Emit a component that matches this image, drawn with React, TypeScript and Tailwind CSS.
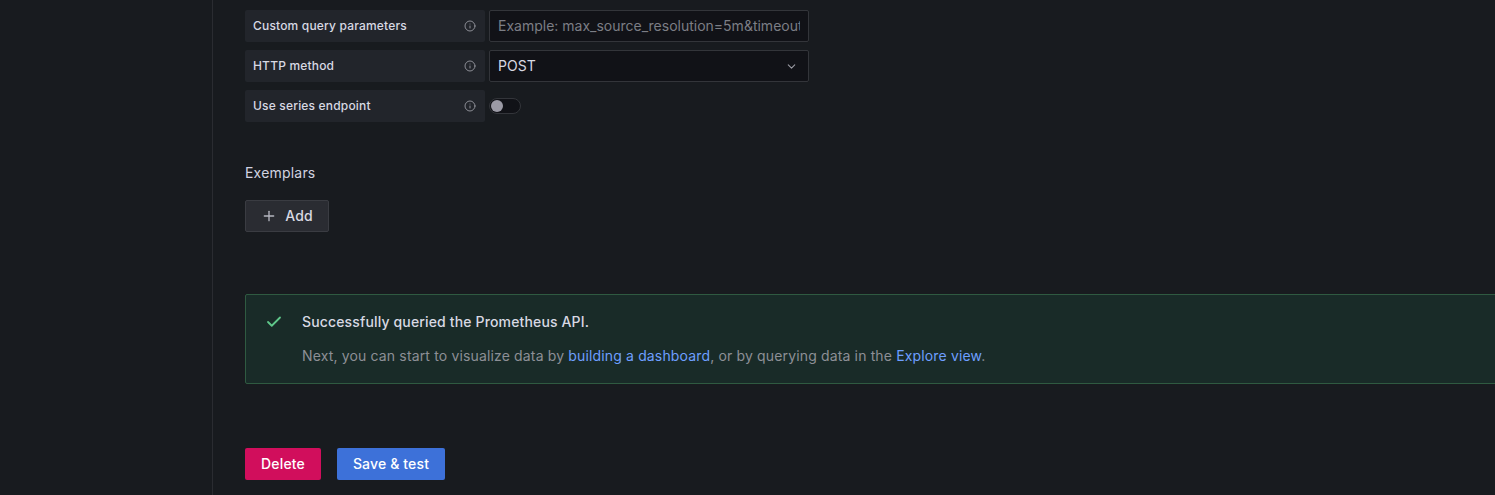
import { Check, ChevronDown, Info, Plus } from "lucide-react";

function Label({ text }: { text: string }) {
  return (
    <div className="flex h-8 w-[240px] shrink-0 items-center justify-between rounded-[2px] bg-[#22252b] px-2 text-xs font-medium tracking-[0.18px] text-[#d8d9e3]">
      <span>{text}</span>
      <Info size={12} strokeWidth={1.75} className="mr-[1px] text-[#9a9ba3]" />
    </div>
  );
}

export default function App() {
  return (
    <div className="flex h-[495px] w-[1495px] overflow-hidden bg-[#181b1f] font-['Inter','Noto_Sans',sans-serif] text-sm">
      <div className="w-[213px] shrink-0 border-r border-[#2a2c31] bg-[#181b1f]" />
      <div className="flex min-w-0 flex-1 flex-col pl-8 pt-[10px]">
        <div className="flex flex-col gap-2">
          <div className="flex gap-1">
            <Label text="Custom query parameters" />
            <div className="flex h-8 w-[320px] items-center overflow-hidden rounded-[2px] border border-[#33353a] bg-[#111217] px-2 text-sm whitespace-nowrap text-[#7c7e85]">
              <span className="block w-[302px] overflow-hidden">Example: max_source_resolution=5m&amp;timeout=10</span>
            </div>
          </div>
          <div className="flex gap-1">
            <Label text="HTTP method" />
            <div className="flex h-8 w-[320px] items-center justify-between rounded-[2px] border border-[#33353a] bg-[#111217] pr-[10px] pl-2 text-sm text-[#d8d9e3]">
              <span>POST</span>
              <ChevronDown size={13} strokeWidth={2} className="text-[#9a9ba3]" />
            </div>
          </div>
          <div className="flex gap-1">
            <Label text="Use series endpoint" />
            <div className="flex h-8 items-center">
              <div className="flex h-4 w-8 items-center rounded-full border border-[#33353a] bg-[#111217] pl-[1px]">
                <div className="h-3 w-3 rounded-full bg-[#9b9aa5]" />
              </div>
            </div>
          </div>
        </div>

        <h3 className="mt-[41px] text-sm leading-[20px] font-normal tracking-[0.2px] text-[#d2d3e0]">Exemplars</h3>

        <button className="mt-[17px] flex h-8 w-[84px] items-center justify-center gap-2 rounded-[2px] border border-[#3a3c42] bg-[#2a2c32] text-sm font-medium tracking-[0.15px] text-[#d8d9e3]">
          <Plus size={16} strokeWidth={2} className="text-[#b5b6c0]" />
          Add
        </button>

        <div className="mt-[62px] flex h-[90px] w-[1300px] shrink-0 rounded-[2px] border border-[#2f5a41] bg-[#192b28]">
          <div className="flex w-[56px] shrink-0 justify-center pt-[18px]">
            <Check size={18} strokeWidth={2.4} className="text-[#5fc78a]" />
          </div>
          <div className="flex flex-col pt-[17px]">
            <p className="text-sm leading-[20px] font-medium tracking-[0.15px] text-[#d8d9e3]">Successfully queried the Prometheus API.</p>
            <p className="mt-[14px] text-sm leading-[20px] tracking-[0.15px] text-[#8d8f96]">
              Next, you can start to visualize data by <span className="text-[#6e9fff]">building a dashboard</span>, or by querying data in the <span className="text-[#6e9fff]">Explore view</span>.
            </p>
          </div>
        </div>

        <div className="mt-16 flex gap-4">
          <button className="h-8 w-[76px] rounded-[2px] bg-[#d10e5c] text-sm font-medium tracking-[0.15px] text-white">Delete</button>
          <button className="h-8 w-[108px] rounded-[2px] bg-[#3d71d9] text-sm font-medium tracking-[0.15px] text-white">Save &amp; test</button>
        </div>
      </div>
    </div>
  );
}
